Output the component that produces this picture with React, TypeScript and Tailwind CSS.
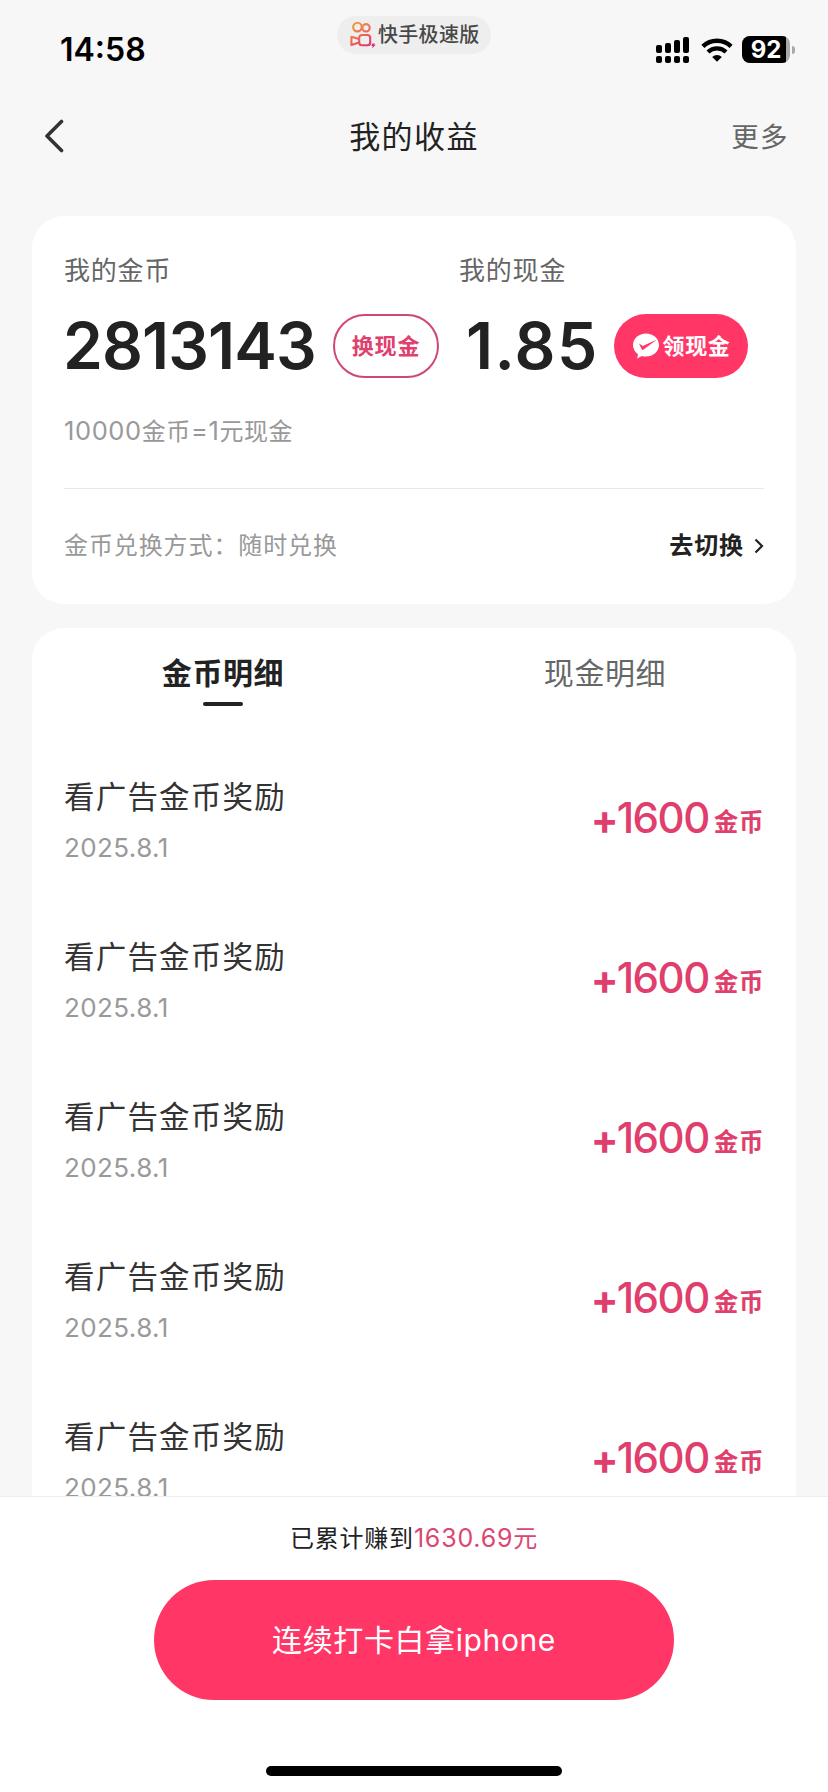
import React, { useState } from 'react';

interface EarningRecord {
  id: number;
  title: string;
  date: string;
  amount: number;
}

const RECORDS: EarningRecord[] = [1, 2, 3, 4, 5].map((id) => ({
  id,
  title: '看广告金币奖励',
  date: '2025.8.1',
  amount: 1600,
}));

const TABS = ['金币明细', '现金明细'];

const KuaishouLogo = () => (
  <svg width="26" height="30" viewBox="0 0 26 30" fill="none" className="shrink-0">
    <defs>
      <linearGradient id="ks" x1="4" y1="2" x2="20" y2="26" gradientUnits="userSpaceOnUse">
        <stop stopColor="#f0a03c" />
        <stop offset="0.5" stopColor="#ee6a52" />
        <stop offset="1" stopColor="#dc3370" />
      </linearGradient>
    </defs>
    <g stroke="url(#ks)" strokeWidth="2.1">
      <circle cx="7.4" cy="7.1" r="4.3" />
      <circle cx="16" cy="7.8" r="3.7" />
      <rect x="9.2" y="15" width="11" height="10.2" rx="2.8" />
      <path d="M9 19 L1.4 16.8 V25 L9 22.6" strokeLinejoin="round" />
    </g>
    <path d="M22.4 23.4 l2.4 0 l-.5 1.4 h1.2 l-3.2 3.6 l.4 -2.3 h-1.4 z" fill="#d92e6e" />
  </svg>
);

const SignalIcon = () => (
  <svg width="34" height="26" viewBox="0 0 34 26" fill="#000">
    <rect x="0" y="8" width="6" height="8" rx="2" />
    <rect x="9" y="6" width="6" height="10" rx="2" />
    <rect x="18" y="3" width="6" height="13" rx="2" />
    <rect x="27" y="0" width="6" height="16" rx="2" />
    <rect x="0" y="19" width="6" height="7" rx="2" />
    <rect x="9" y="19" width="6" height="7" rx="2" />
    <rect x="18" y="19" width="6" height="7" rx="2" />
    <rect x="27" y="19" width="6" height="7" rx="2" />
  </svg>
);

const WifiIcon = () => (
  <svg width="32" height="24" viewBox="0 0 32 24" fill="none">
    <path d="M1.9 8.3 A20.5 20.5 0 0 1 30.1 8.3" stroke="#000" strokeWidth="4.4" />
    <path d="M7 14 A12.8 12.8 0 0 1 25 14" stroke="#000" strokeWidth="4.2" />
    <path d="M11.2 19 A7 7 0 0 1 20.8 19 L16 23.8 Z" fill="#000" />
  </svg>
);

const StatusBar = () => (
  <div className="relative flex h-[88px] items-start justify-between pl-[60px] pr-[33px]">
    <span className="mt-[30px] text-[32px] font-semibold leading-10 text-black">14:58</span>
    <div className="absolute left-[337px] top-4 flex h-[38px] w-[154px] items-center rounded-full bg-[#eeeeee] pl-[13px]">
      <KuaishouLogo />
      <span className="ml-[2px] text-[20px] font-medium leading-none tracking-[0.3px] text-[#484848] whitespace-nowrap">快手极速版</span>
    </div>
    <div className="mt-9 flex h-[27px] items-center">
      <SignalIcon />
      <div className="ml-[11px]">
        <WifiIcon />
      </div>
      <div className="ml-[9px] flex h-[27px] w-12 overflow-hidden rounded-[8px] bg-[#a9a9a9]">
        <div className="flex h-full w-11 items-center justify-center bg-black pl-1 text-[24px] font-bold leading-none text-white">92</div>
      </div>
      <div className="ml-[2px] h-2 w-[3px] rounded-r-full bg-[#a9a9a9]" />
    </div>
  </div>
);

const NavBar = () => (
  <div className="grid h-24 grid-cols-3 items-center pl-11 pr-[39px]">
    <svg width="20" height="34" viewBox="0 0 20 34" fill="none">
      <path d="M17.5 2.5 L3 17 L17.5 31.5" stroke="#333" strokeWidth="3.6" strokeLinecap="round" strokeLinejoin="round" />
    </svg>
    <h1 className="pr-[5px] pt-[2px] text-center text-[31px] leading-10 tracking-[1.4px] text-[#222]">我的收益</h1>
    <span className="pt-[2px] text-right text-[27.5px] leading-10 tracking-[1.4px] text-[#666]">更多</span>
  </div>
);

const ChatCheckIcon = () => (
  <svg width="28" height="28" viewBox="0 0 28 28">
    <path d="M14 1.5 C6.9 1.5 1 6.6 1 13 C1 16.8 3 20.2 6 22.3 L5.2 26.4 L9.8 24 C11.1 24.4 12.5 24.6 14 24.6 C21.1 24.6 27 19.4 27 13 C27 6.6 21.1 1.5 14 1.5 Z" fill="#fff" />
    <path d="M7 11.5 L10.8 14 L25 7.5 L11.6 17.6 C10.7 18.2 10 17.9 9.6 17 Z" fill="#ff3666" />
  </svg>
);

const BalanceCard = () => (
  <section className="mx-8 mt-8 h-[388px] rounded-[32px] bg-white px-8">
    <div className="flex pt-[35px]">
      <div className="w-[395px]">
        <p className="text-[26px] leading-10 tracking-[0.8px] text-[#666]">我的金币</p>
        <div className="mt-[23px] flex h-16 items-center">
          <span className="-ml-px w-[270px] text-[64px] font-semibold leading-none tracking-[-0.9px] text-[#222]">2813143</span>
          <button className="h-16 w-[106px] rounded-full border-2 border-[#d0476f] text-[22px] font-bold tracking-[0.8px] text-[#e0406f]">换现金</button>
        </div>
      </div>
      <div>
        <p className="text-[26px] leading-10 tracking-[0.8px] text-[#666]">我的现金</p>
        <div className="mt-[23px] flex h-16 items-center">
          <span className="w-[155px] pl-[7px] text-[64px] font-semibold leading-none tracking-[1.4px] text-[#222]">1.85</span>
          <button className="flex h-16 w-[134px] items-center justify-center gap-[3px] rounded-full bg-[#ff3666] text-[22px] font-bold tracking-[0.6px] text-white">
            <ChatCheckIcon />
            领现金
          </button>
        </div>
      </div>
    </div>
    <p className="mt-[33px] h-10 text-[24px] leading-10 tracking-[0.6px] text-[#999]">
      <span className="text-[25.5px]">10000</span>金币<span className="text-[25.5px]">=1</span>元现金
    </p>
    <div className="mt-[37px] flex h-[115px] items-center justify-between border-t border-[#e8e8e8]">
      <span className="text-[24px] tracking-[0.9px] text-[#999]">金币兑换方式：随时兑换</span>
      <span className="flex items-center gap-[10px] text-[24px] font-bold tracking-[0.9px] text-[#222]">
        去切换
        <svg width="10" height="16" viewBox="0 0 10 16" fill="none">
          <path d="M1.5 1.5 L8 8 L1.5 14.5" stroke="#222" strokeWidth="2.2" />
        </svg>
      </span>
    </div>
  </section>
);

const RecordRow: React.FC<{ record: EarningRecord }> = ({ record }) => (
  <li className="flex h-40 items-start justify-between px-8">
    <div className="pt-[28px]">
      <p className="text-[30.5px] leading-[46px] tracking-[1.2px] text-[#333]">{record.title}</p>
      <p className="mt-[10px] text-[26px] leading-9 tracking-[0.4px] text-[#999]">{record.date}</p>
    </div>
    <div className="flex h-[62px] items-center pt-[41px] leading-none text-[#e03e6c] box-content">
      <span className="mt-[2px] text-[41px] font-bold tracking-[-2px]">+</span>
      <span className="text-[42px] font-medium tracking-[-1.5px]">{record.amount}</span>
      <span className="ml-[5px] mt-[9px] text-[24.5px] font-bold tracking-[0.6px]">金币</span>
    </div>
  </li>
);

export default function App() {
  const [activeTab, setActiveTab] = useState(0);

  return (
    <div className="flex h-[1792px] w-[828px] flex-col overflow-hidden bg-[#f7f7f7] font-['Inter','Noto_Sans_CJK_SC',sans-serif]">
      <StatusBar />
      <NavBar />
      <BalanceCard />

      <section className="mx-8 mt-6 h-[868px] overflow-hidden rounded-t-[32px] bg-white">
        <div className="grid h-[118px] grid-cols-2">
          {TABS.map((tab, idx) => (
            <button key={tab} onClick={() => setActiveTab(idx)} className="flex flex-col items-center pt-[21px]">
              <span className={`text-[30px] leading-[48px] tracking-[0.6px] ${activeTab === idx ? 'font-bold text-[#222]' : 'text-[#666]'}`}>
                {tab}
              </span>
              {activeTab === idx && <span className="mt-[5px] h-1 w-10 rounded-full bg-[#222]" />}
            </button>
          ))}
        </div>
        <ul>
          {RECORDS.map((record) => (
            <RecordRow key={record.id} record={record} />
          ))}
        </ul>
      </section>

      <footer className="flex h-[296px] shrink-0 flex-col items-center border-t border-[#eeeeee] bg-white">
        <p className="mt-[23px] h-9 text-[24px] leading-9 tracking-[0.8px] text-[#222]">
          已累计赚到<span className="text-[#dc4672]"><span className="text-[25px]">1630.69</span>元</span>
        </p>
        <button className="mt-[24px] h-[120px] w-[520px] rounded-full bg-[#ff3666] text-[30px] tracking-[0.6px] text-white">
          连续打卡白拿iphone
        </button>
        <div className="mt-[66px] h-[10px] w-[296px] rounded-full bg-black" />
      </footer>
    </div>
  );
}
